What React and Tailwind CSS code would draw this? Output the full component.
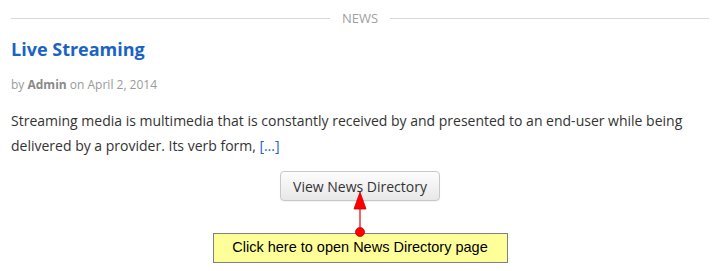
export default function App() {
  const os = { fontFamily: '"Open Sans", sans-serif' };
  return (
    <div className="w-[726px] h-[271px] bg-white overflow-hidden relative" style={os}>
      <div className="pl-[11px] w-[709px]">
        <div className="flex items-center pt-[10px] h-[26px]">
          <div className="flex-1 h-px bg-[#d9d9d9]" />
          <div className="px-[12px] text-[13px] leading-[16px] text-[#a0a0a0]">NEWS</div>
          <div className="flex-1 h-px bg-[#d9d9d9]" />
        </div>
        <h2 className="mt-[11px] text-[18px] leading-[24px] font-bold text-[#1a63c4]">Live Streaming</h2>
        <div className="mt-[15px] text-[12px] leading-[18px] text-[#9a9a9a]">
          by <span className="font-bold text-[#8a8a8a]">Admin</span> on April 2, 2014
        </div>
        <p className="mt-[14px] text-[14px] leading-[25px] text-[#333333]">
          Streaming media is multimedia that is constantly received by and presented to an end-user while being delivered by a provider. Its verb form, <a className="text-[#1a63c4]">[…]</a>
        </p>
      </div>
      <div className="relative mt-[13px] flex flex-col items-center">
        <button className="ml-[-6px] w-[160px] h-[30px] rounded-[4px] border border-[#c8c8c8] bg-gradient-to-b from-[#fdfdfd] to-[#e8e8e8] text-[14px] text-[#333] shadow-[0_1px_1px_rgba(0,0,0,0.05)]" style={os}>
          View News Directory
        </button>
        <div className="ml-[-6px] mt-[32px] w-[295px] h-[30px] bg-[#ffff99] border border-[#808080] flex items-center justify-center text-[14.5px] text-black" style={{ fontFamily: '"Liberation Sans", Arial, sans-serif' }}>
          Click here to open News Directory page
        </div>
        <svg className="absolute left-[350px] top-[20px]" width="20" height="48" viewBox="0 0 20 48">
          <polygon points="10,1 4,18 16,18" fill="#ff0000" stroke="#cc0000" strokeWidth="0.8" />
          <line x1="10" y1="18" x2="10" y2="41" stroke="#e00000" strokeWidth="1.2" />
          <circle cx="10" cy="41" r="4.5" fill="#ff0000" stroke="#cc0000" strokeWidth="0.8" />
        </svg>
      </div>
    </div>
  );
}
